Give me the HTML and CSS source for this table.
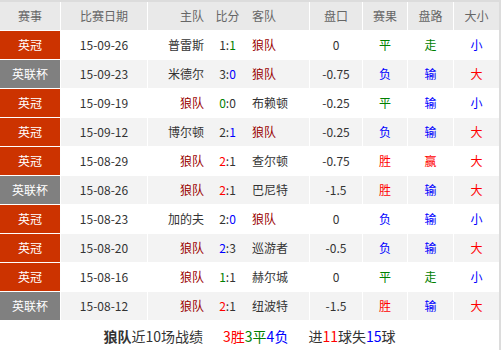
FILE: index.html
```html
<!DOCTYPE html>
<html lang="zh-CN">
<head>
<meta charset="utf-8">
<title>狼队近10场战绩</title>
<link rel="stylesheet" href="styles.css">
</head>
<body>
<div class="wrap">
  <table class="tbl">
    <colgroup>
      <col class="c-lg"><col class="c-dt"><col class="c-ht"><col class="c-sc"><col class="c-at">
      <col class="c-hc"><col class="c-rs"><col class="c-pl"><col class="c-ou">
    </colgroup>
    <thead>
      <tr>
        <th>赛事</th><th>比赛日期</th><th class="home nob">主队</th><th class="nob">比分</th><th class="away">客队</th>
        <th>盘口</th><th>赛果</th><th>盘路</th><th>大小</th>
      </tr>
    </thead>
    <tbody>
      <tr>
        <td class="lg ec">英冠</td><td>15-09-26</td><td class="home nob">普雷斯</td><td class="nob">1:<span class="d">1</span></td><td class="away"><span class="wolf">狼队</span></td>
        <td>0</td><td class="d">平</td><td class="d">走</td><td class="l">小</td>
      </tr>
      <tr>
        <td class="lg lc">英联杯</td><td>15-09-23</td><td class="home nob">米德尔</td><td class="nob">3:<span class="l">0</span></td><td class="away"><span class="wolf">狼队</span></td>
        <td>-0.75</td><td class="l">负</td><td class="l">输</td><td class="w">大</td>
      </tr>
      <tr>
        <td class="lg ec">英冠</td><td>15-09-19</td><td class="home nob"><span class="wolf">狼队</span></td><td class="nob"><span class="d">0</span>:0</td><td class="away">布赖顿</td>
        <td>-0.25</td><td class="d">平</td><td class="l">输</td><td class="l">小</td>
      </tr>
      <tr>
        <td class="lg ec">英冠</td><td>15-09-12</td><td class="home nob">博尔顿</td><td class="nob">2:<span class="l">1</span></td><td class="away"><span class="wolf">狼队</span></td>
        <td>-0.25</td><td class="l">负</td><td class="l">输</td><td class="w">大</td>
      </tr>
      <tr>
        <td class="lg ec">英冠</td><td>15-08-29</td><td class="home nob"><span class="wolf">狼队</span></td><td class="nob"><span class="w">2</span>:1</td><td class="away">查尔顿</td>
        <td>-0.75</td><td class="w">胜</td><td class="w">赢</td><td class="w">大</td>
      </tr>
      <tr>
        <td class="lg lc">英联杯</td><td>15-08-26</td><td class="home nob"><span class="wolf">狼队</span></td><td class="nob"><span class="w">2</span>:1</td><td class="away">巴尼特</td>
        <td>-1.5</td><td class="w">胜</td><td class="l">输</td><td class="w">大</td>
      </tr>
      <tr>
        <td class="lg ec">英冠</td><td>15-08-23</td><td class="home nob">加的夫</td><td class="nob">2:<span class="l">0</span></td><td class="away"><span class="wolf">狼队</span></td>
        <td>0</td><td class="l">负</td><td class="l">输</td><td class="l">小</td>
      </tr>
      <tr>
        <td class="lg ec">英冠</td><td>15-08-20</td><td class="home nob"><span class="wolf">狼队</span></td><td class="nob"><span class="l">2</span>:3</td><td class="away">巡游者</td>
        <td>-0.5</td><td class="l">负</td><td class="l">输</td><td class="w">大</td>
      </tr>
      <tr>
        <td class="lg ec">英冠</td><td>15-08-16</td><td class="home nob"><span class="wolf">狼队</span></td><td class="nob"><span class="d">1</span>:1</td><td class="away">赫尔城</td>
        <td>0</td><td class="d">平</td><td class="d">走</td><td class="l">小</td>
      </tr>
      <tr>
        <td class="lg lc">英联杯</td><td>15-08-12</td><td class="home nob"><span class="wolf">狼队</span></td><td class="nob"><span class="w">2</span>:1</td><td class="away">纽波特</td>
        <td>-1.5</td><td class="w">胜</td><td class="l">输</td><td class="w">大</td>
      </tr>
    </tbody>
  </table>
  <div class="summary">
    <span class="team">狼队</span>近10场战绩<span class="grp"><span class="w">3胜</span><span class="d">3平</span><span class="l">4负</span></span><span class="grp">进<span class="w">11</span>球失<span class="l">15</span>球</span>
  </div>
</div>
</body>
</html>
```

FILE: styles.css
```css
html, body {
  margin: 0;
  padding: 0;
  background: #ffffff;
}

body {
  font-family: "Noto Sans CJK SC", "Microsoft YaHei", "Noto Sans", sans-serif;
  color: #333333;
}

.wrap {
  width: 501px;
  box-sizing: border-box;
  border-top: 2px solid #dcdcdc;
  border-right: 2px solid #dcdcdc;
}

.tbl {
  width: 499px;
  table-layout: fixed;
  border-collapse: separate;
  border-spacing: 0;
  font-size: 12px;
}

.c-lg { width: 61px; }
.c-dt { width: 87px; }
.c-ht { width: 58px; }
.c-sc { width: 43px; }
.c-at { width: 61px; }
.c-hc { width: 53px; }
.c-rs { width: 45px; }
.c-pl { width: 46px; }
.c-ou { width: 45px; }

.tbl th,
.tbl td {
  box-sizing: border-box;
  height: 29px;
  padding: 0;
  text-align: center;
  vertical-align: middle;
  white-space: nowrap;
  border-right: 1px solid #ffffff;
  border-bottom: 1px solid #ffffff;
  line-height: 16px;
}

.tbl th:last-child,
.tbl td:last-child {
  border-right: 0;
}

.tbl th {
  background: #e9e9e9;
  color: #666666;
  font-weight: normal;
}

.tbl tbody tr:nth-child(even) td {
  background: #f3f3f3;
}

.tbl .nob {
  border-right: 0;
}

.tbl .home {
  text-align: right;
  padding-right: 2px;
}

.tbl .away {
  text-align: left;
  padding-left: 3px;
}

.tbl td.lg {
  color: #ffffff;
}

.tbl tbody tr td.ec {
  background: #cc3300;
}

.tbl tbody tr td.lc {
  background: #808080;
}

.wolf {
  color: #990000;
}

.w { color: #ff0000; }
.d { color: #008000; }
.l { color: #0000ff; }

.summary {
  height: 29px;
  text-align: center;
  font-size: 14px;
  line-height: 29px;
  padding-top: 1px;
  color: #333333;
}

.summary .team {
  font-weight: bold;
}

.summary .grp {
  margin-left: 20px;
}
```
